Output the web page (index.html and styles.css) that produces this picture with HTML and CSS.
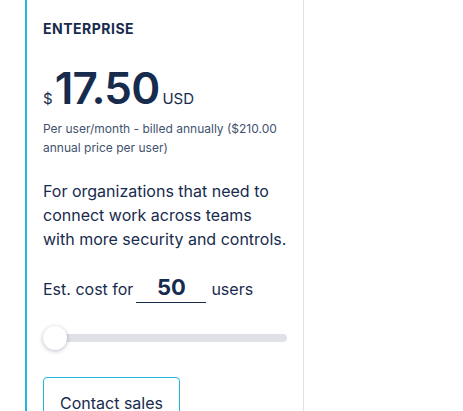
FILE: index.html
```html
<!DOCTYPE html>
<html lang="en">
<head>
    <meta charset="UTF-8">
    <meta name="viewport" content="width=device-width, initial-scale=1.0">
    <title>Enterprise plan</title>
    <link rel="stylesheet" href="styles.css">
</head>
<body>
    <div class="plan-card">
        <h3 class="plan-name">ENTERPRISE</h3>

        <div class="price">
            <span class="price-currency">$</span>
            <span class="price-amount">17.50</span>
            <span class="price-unit">USD</span>
        </div>
        <p class="price-note">Per user/month - billed annually ($210.00 annual price per user)</p>

        <p class="plan-desc">For organizations that need to connect work across teams with more security and controls.</p>

        <div class="estimate">
            <label for="users">Est. cost for</label>
            <input type="text" id="users" class="users-input" value="50">
            <span>users</span>
        </div>

        <div class="slider">
            <div class="slider-track"></div>
            <div class="slider-thumb"></div>
        </div>

        <button type="button" class="contact-btn">Contact sales</button>
    </div>
</body>
</html>
```

FILE: styles.css
```css
body {
    margin: 0;
    font-family: Inter, "Noto Sans", sans-serif;
    background-color: #fff;
    color: #172b4d;
}

.plan-card {
    margin-left: 25px;
    width: 279px;
    box-sizing: border-box;
    border-left: 2px solid #1fb7da;
    border-right: 1px solid #dfe1e6;
    padding: 20px 16px 0 16px;
    min-height: 411px;
}

.plan-name {
    margin: 0;
    font-size: 14px;
    font-weight: 700;
    letter-spacing: 0.5px;
    line-height: 18px;
}

.price {
    display: flex;
    align-items: baseline;
    margin-top: 26px;
    height: 48px;
}

.price-currency {
    font-size: 15px;
    margin-right: 2px;
}

.price-amount {
    font-size: 44px;
    font-weight: 600;
    letter-spacing: -0.8px;
    line-height: 48px;
}

.price-unit {
    font-size: 15px;
    margin-left: 3px;
}

.price-note {
    margin: 7px 0 0;
    font-size: 12px;
    line-height: 19px;
    color: #42526e;
}

.plan-desc {
    margin: 22px 0 0;
    font-size: 16px;
    line-height: 24px;
}

.estimate {
    display: flex;
    align-items: baseline;
    margin-top: 23px;
    font-size: 16px;
}

.users-input {
    width: 70px;
    margin: 0 5px 0 3px;
    border: none;
    border-bottom: 1px solid #172b4d;
    font-family: inherit;
    font-size: 22px;
    font-weight: 700;
    color: #172b4d;
    text-align: center;
    padding: 0 0 2px;
    outline: none;
}

.slider {
    position: relative;
    margin-top: 23px;
    height: 24px;
    display: flex;
    align-items: center;
}

.slider-track {
    flex: 1;
    height: 8px;
    border-radius: 4px;
    background: #dfe1e6;
}

.slider-thumb {
    position: absolute;
    left: 0;
    top: 0;
    width: 24px;
    height: 24px;
    border-radius: 50%;
    background: #fff;
    box-shadow: 0 1px 4px rgba(9, 30, 66, 0.3);
}

.contact-btn {
    display: block;
    margin-top: 27px;
    width: 137px;
    height: 44px;
    background: #fff;
    border: 1px solid #1fb7da;
    border-radius: 4px;
    font-family: inherit;
    font-size: 16px;
    color: #172b4d;
    padding: 8px 0 0;
}
```
